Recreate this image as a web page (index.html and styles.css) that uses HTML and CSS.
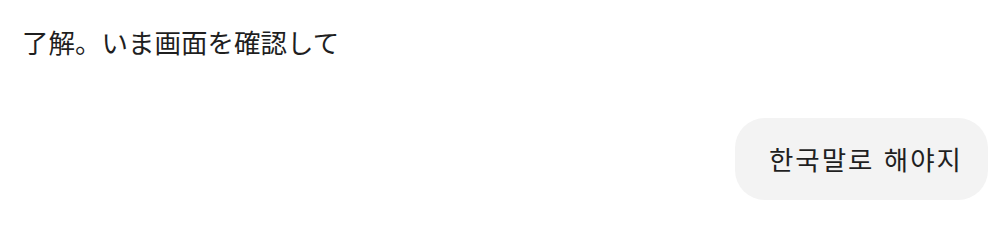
FILE: index.html
```html
<!DOCTYPE html>
<html lang="ja">
<head>
    <meta charset="UTF-8">
    <title>Chat</title>
    <link rel="stylesheet" href="styles.css">
</head>
<body>
    <main class="thread">
        <div class="msg assistant" lang="ja">了解。いま画面を確認して</div>
        <div class="msg user" lang="ko">
            <div class="bubble">한국말로 해야지</div>
        </div>
    </main>
</body>
</html>
```
FILE: styles.css
```css
body {
    margin: 0;
    padding: 0;
    background-color: #ffffff;
    color: #1f1f1f;
    font-family: "Noto Sans CJK JP", "Noto Sans", sans-serif;
}
.thread {
    display: flex;
    flex-direction: column;
    padding: 23px 20px 0 22px;
}
.msg {
    font-size: 26.5px;
    line-height: 38px;
}
.user {
    display: flex;
    justify-content: flex-end;
    margin-top: 57px;
}
.user .bubble {
    font-family: "Noto Sans CJK KR", "Noto Sans", sans-serif;
    letter-spacing: 2px;
    background-color: #f3f3f3;
    border-radius: 30px;
    padding: 22px 25px 22px 34px;
}
```
